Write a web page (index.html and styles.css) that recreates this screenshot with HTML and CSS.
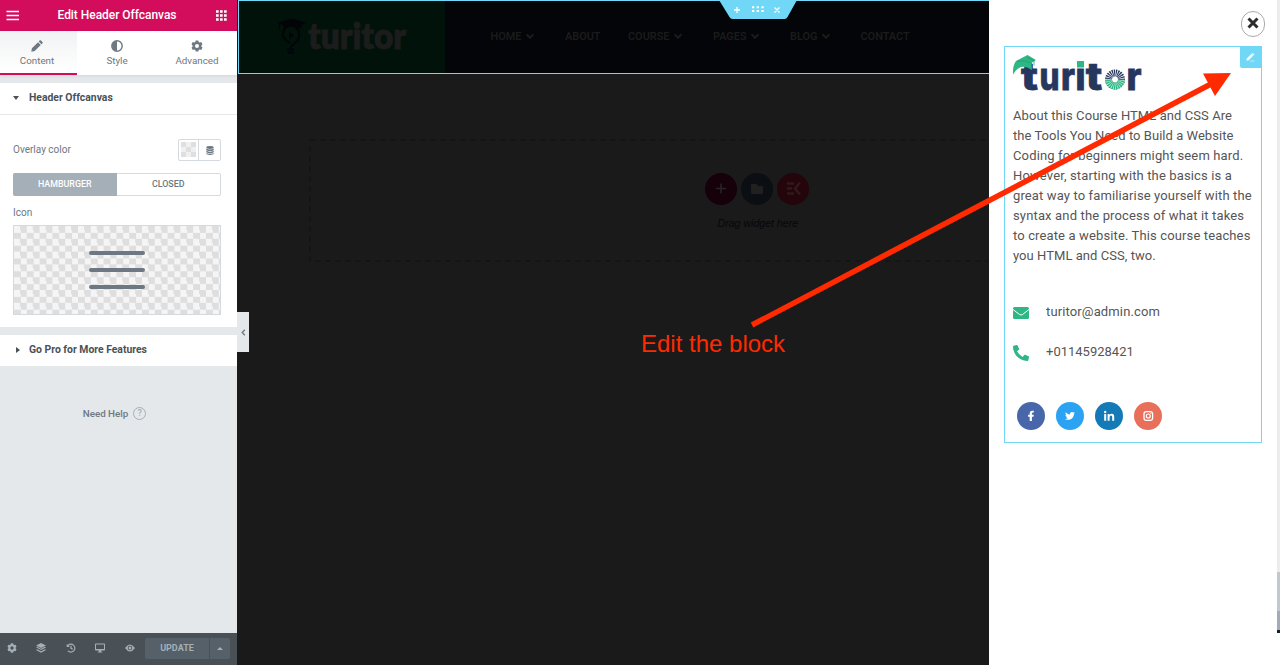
FILE: index.html
```html
<!DOCTYPE html>
<html lang="en">
<head>
<meta charset="utf-8">
<title>Edit Header Offcanvas</title>
<link rel="stylesheet" href="styles.css">
</head>
<body>
<aside class="panel">
  <header class="panel-header">
    <svg width="14" height="11" viewBox="0 0 14 11"><path d="M.5 1.500h12.500M.5 5.500h12.500M.5 9.500h12.500" stroke="#fff" stroke-width="1.700"/></svg>
    <h1>Edit Header Offcanvas</h1>
    <svg width="11" height="11" viewBox="0 0 11 11"><path d="M0 1.500h11M0 5.500h11M0 9.500h11" stroke="#fff" stroke-width="2.700" stroke-dasharray="2.700 1.300"/></svg>
  </header>
  <nav class="tabs">
    <div class="tab active">
      <svg width="12" height="12" viewBox="0 0 12 12"><path d="M.3 11.700l.6-3.400L7 2.200l2.800 2.800-6.100 6.100zM7.700 1.500l.9-.9q.7-.6 1.400 0l1.400 1.400q.6.700 0 1.400l-.9.900z" fill="#6d7882"/></svg>
      <span>Content</span></div>
    <div class="tab">
      <svg width="12" height="12" viewBox="0 0 12 12"><circle cx="6" cy="6" r="5.200" fill="none" stroke="#6d7882" stroke-width="1.400"/><path d="M6 1a5 5 0 0 0 0 10z" fill="#6d7882"/></svg>
      <span>Style</span></div>
    <div class="tab wide">
      <svg width="12" height="12" viewBox="0 0 12 12"><use href="#gear" fill="#6d7882"/></svg>
      <span>Advanced</span></div>
  </nav>
  <section class="section first">
    <h2><i class="caret down"></i>Header Offcanvas</h2>
    <div class="controls">
      <div class="color-row"><span>Overlay color</span>
        <div class="color-box"><div class="swatch-wrap"><i class="swatch"></i></div><div class="stack"><svg width="8" height="9" viewBox="0 0 8 9"><ellipse cx="4" cy="1.500" rx="3.700" ry="1.400"/><path d="M.3 2.600q3.700 1.700 7.400 0v1.600q-3.700 1.700-7.400 0zM.3 4.800q3.700 1.700 7.400 0v1.500q-3.700 1.700-7.400 0zM.3 6.900q3.700 1.700 7.400 0v1q-3.700 2-7.400 0z"/></svg></div></div>
      </div>
      <div class="toggle"><span class="on">HAMBURGER</span><span>CLOSED</span></div>
      <div class="label">Icon</div>
      <div class="preview"><i></i><i></i><i></i></div>
    </div>
  </section>
  <section class="section pro"><h2><i class="caret right"></i>Go Pro for More Features</h2></section>
  <div class="help">Need Help <span>?</span></div>
  <footer class="panel-footer">
    <svg width="10" height="10" viewBox="0 0 12 12"><path id="gear" fill-rule="evenodd" d="M4.700.4h2.600l.4 1.500 1 .6 1.500-.5 1.300 2.300L10.400 5.500v1.100l1.100 1.100-1.300 2.200-1.500-.4-1 .6-.4 1.500H4.700l-.4-1.500-1-.6-1.500.4L.5 7.700l1.100-1.100V5.500L.5 4.300 1.800 2l1.500.5 1-.6zM6 4a2 2 0 1 0 0 4 2 2 0 0 0 0-4z"/></svg>
    <svg width="10" height="10" viewBox="0 0 10 10"><path d="M5 0l5 2.500L5 5 0 2.500zM0 4.300l1.200-.5L5 5.700l3.800-1.900 1.200.6-5 2.700zM0 6.900l1.200-.6L5 8.200l3.800-1.900 1.200.6L5 9.700z"/></svg>
    <svg width="10" height="10" viewBox="0 0 10 10"><path d="M1.700 2.600a4 4 0 1 1 .2 5.200M5 2.800v2.500l1.700 1" fill="none" stroke="#a4afb7" stroke-width="1.200"/><path d="M.7.900v3.200h3.200z"/></svg>
    <svg width="10" height="10" viewBox="0 0 10 10"><path fill-rule="evenodd" d="M.7.500h8.600q.7 0 .7.700v5.600q0 .7-.7.700H6.100l.3 1.200h.8v.8H2.800v-.8h.8l.3-1.200H.7Q0 7.500 0 6.800V1.200Q0 .5.700.5zM1 1.500v4.400h8V1.500z"/></svg>
    <svg width="10" height="10" viewBox="0 0 10 10"><path fill-rule="evenodd" d="M0 5q5-7 10 0-5 7-10 0zM5 2.700a2.300 2.300 0 1 0 0 4.600 2.300 2.300 0 0 0 0-4.600z"/><circle cx="5" cy="5" r="1.500"/></svg>
    <div class="update"><b>UPDATE</b><span><i></i></span></div>
  </footer>
</aside>

<main class="canvas">
  <div class="site-header">
    <div class="site-logo">
      <svg width="206" height="72" viewBox="239 1 206 72">
        <path d="M278 23l14-4 13 4-4 2v3q-8-4-17 0v-3zM279.500 23v7" fill="#020408" stroke="#020408"/>
        <path d="M290 49q1-3 5-6 5-4 4-9a8 8 0 1 0-14 5q3 3 5 4M287 50l7-1M288 53l6-1" fill="none" stroke="#020408" stroke-width="2"/>
        <path d="M289 32l5 3.500-5 3.500z" fill="#020408"/>
        <text x="308" y="49" textLength="98" lengthAdjust="spacingAndGlyphs" class="dark-word">turitor</text>
      </svg>
    </div>
    <nav class="site-nav">
      <span>HOME <i></i></span><span>ABOUT</span><span>COURSE <i></i></span><span>PAGES <i></i></span><span>BLOG <i></i></span><span>CONTACT</span>
    </nav>
    <svg class="handle" width="78" height="19" viewBox="0 0 78 19"><path d="M0 0h78L68.500 17q-1 2-3 2h-52q-2 0-3-2z" fill="#71d7f7"/><path d="M15 10h6M18 7v6M55.500 7.500l5 5M60.500 7.500l-5 5" stroke="#fff" stroke-width="1.300"/><path d="M33 7.200h12M33 11h12" stroke="#fff" stroke-width="2" stroke-dasharray="2.300 2.400"/></svg>
  </div>
  <div class="drop">
    <svg class="dash" width="679" height="123"><rect x="1" y="1" width="700" height="121" fill="none" stroke="#151515" stroke-width="2" stroke-dasharray="6 4"/></svg>
    <div class="circles">
      <svg width="32" height="32"><circle cx="16" cy="16" r="16" fill="#16000a"/><path d="M11 15.500h10M16 10.500v10" stroke="#2a2426" stroke-width="1.500"/></svg>
      <svg width="32" height="32"><circle cx="16" cy="16" r="16" fill="#0b0e12"/><path d="M10 12q0-1 1-1h4l2 2h4q1 0 1 1v6q0 1-1 1H11q-1 0-1-1z" fill="#202020"/></svg>
      <svg width="32" height="32"><circle cx="16" cy="16" r="16" fill="#23050b"/><path d="M10 10.500h7M10 15.500h5M10 20.500h7M23 9.500l-5 6 5 6" fill="none" stroke="#30181d" stroke-width="2.500"/></svg>
    </div>
    <p>Drag widget here</p>
  </div>
  <div class="note">Edit the block</div>
  <div class="collapse"><svg width="5" height="7" viewBox="0 0 5 7"><path d="M3.800.7L1.200 3.500l2.600 2.800" fill="none" stroke="#6d7882" stroke-width="1.300"/></svg></div>
</main>

<aside class="offcanvas">
  <div class="close"><svg width="12" height="12" viewBox="0 0 12 12"><path d="M1.500 1.500l9 9M10.500 1.500l-9 9" stroke="#2d2d2d" stroke-width="3"/></svg></div>
  <div class="block">
    <div class="edit"><svg width="9" height="9" viewBox="0 0 9 9"><path d="M.8 5.800L5.600 1l1.500 1.500-4.800 4.800H.8zM6.200.5l.4-.4 1.500 1.500-.4.4zM4 8h4.500" fill="#fff" stroke="#fff" stroke-width=".5"/></svg></div>
    <svg class="brand" width="130" height="38" viewBox="1013 54 130 38">
      <g class="brand-word">
        <text x="1021" y="89.500" textLength="17" lengthAdjust="spacingAndGlyphs">t</text>
        <text x="1039.500" y="89.500" textLength="20" lengthAdjust="spacingAndGlyphs">u</text>
        <text x="1061" y="89.500" textLength="14" lengthAdjust="spacingAndGlyphs">r</text>
        <text x="1075.500" y="89.500" textLength="10" lengthAdjust="spacingAndGlyphs">ı</text>
        <text x="1085.800" y="89.500" textLength="16.500" lengthAdjust="spacingAndGlyphs">t</text>
        <text x="1126.500" y="89.500" textLength="15" lengthAdjust="spacingAndGlyphs">r</text>
      </g>
      <rect x="1077" y="61" width="7" height="6.500" fill="#2eb784"/>
      <circle cx="1115" cy="79.500" r="6.500" fill="none" stroke="#26375f" stroke-width="7" stroke-dasharray="1.050 .65"/>
      <path d="M1108.500 79.500a6.500 6.500 0 0 0 13 0" fill="none" stroke="#2eb784" stroke-width="7"/>
      <path d="M1108.500 79.500a6.500 6.500 0 0 0 13 0" fill="none" stroke="#d6f1e6" stroke-width="7" stroke-dasharray=".55 1.150"/>
      <path d="M1013 74.500q-.5-9 3-13.500L1027.500 55l8.500 5-4.500 3 .5 7q-6-4-11-3-4 1-8 7.500z" fill="#2eb784"/>
      <path d="M1017 61q8-1 14.500 2l-.3 6M1027 57.500l7 3v5" fill="none" stroke="#1d9c6d" stroke-width=".7"/>
    </svg>
    <p class="about"><span class="l1">About this Course HTML and CSS Are</span><br><span class="l2">the Tools You Need to Build a Website</span><br><span class="l3">Coding for beginners might seem hard.</span><br><span class="l4">However, starting with the basics is a</span><br><span class="l5">great way to familiarise yourself with the</span><br><span class="l6">syntax and the process of what it takes</span><br><span class="l7">to create a website. This course teaches</span><br><span class="l8">you HTML and CSS, two.</span></p>
    <div class="contact mail"><svg width="16" height="12" viewBox="0 0 16 12"><rect width="16" height="12" rx="1.500" fill="#2eb784"/><path d="M0 2.500l6.500 5q1.500 1 3 0l6.500-5" fill="none" stroke="#fff"/></svg><span>turitor@admin.com</span></div>
    <div class="contact phone"><svg width="16" height="16" viewBox="0 0 512 512"><path fill="#2eb784" d="M18.600 24.600l104-24q18-3 26 13l48 112q6 16-7 28l-61 50q53 113 180 180l50-61q12-13 28-7l112 48q16 8 13 26l-24 104q-4 18-23 18C207 512 0 303 0 48q0-19 18.600-23.400z"/></svg><span>+01145928421</span></div>
    <div class="socials">
      <svg width="28" height="28" viewBox="0 0 28 28"><circle cx="14" cy="14" r="14" fill="#4867aa"/><path d="M12.700 19v-4.300h-1.600v-1.900h1.600v-1.500q0-2.600 2.600-2.600l1.500.1V10.500H16q-1.100 0-1.100 1v1.300h1.900l-.3 1.900h-1.600V19z" fill="#fff"/></svg>
      <svg width="28" height="28" viewBox="0 0 28 28"><circle cx="14" cy="14" r="14" fill="#2ba3f2"/><path transform="translate(9 8.800) scale(.0195)" d="M459 152c1 4 1 9 1 13 0 139-106 299-299 299-59 0-115-17-161-47 55 6 108-9 150-41-44-1-80-30-93-68 16 2 30 2 47-2-47-10-82-52-82-103v-1q22 12 47 13C27 186 11 129 37 80c52 64 130 105 216 110-16-75 41-134 102-134 30 0 58 13 77 33q35-7 66-25-11 35-46 58 31-4 60-16-21 29-53 46z" fill="#fff"/></svg>
      <svg width="28" height="28" viewBox="0 0 28 28"><circle cx="14" cy="14" r="14" fill="#1479b7"/><path d="M9.200 12h2v6.700h-2zM12.600 12h2v1q.8-1.200 2.100-1.200 2.500 0 2.500 2.900v4h-2v-3.600q0-1.500-1.100-1.500-1.500 0-1.500 1.800v3.300h-2z" fill="#fff"/><circle cx="10.200" cy="10" r="1.200" fill="#fff"/></svg>
      <svg width="28" height="28" viewBox="0 0 28 28"><circle cx="14" cy="14" r="14" fill="#e8705a"/><rect x="10" y="9.700" width="8.600" height="8.600" rx="2.300" fill="none" stroke="#fff" stroke-width="1.300"/><circle cx="14.300" cy="14" r="2" fill="none" stroke="#fff" stroke-width="1.200"/><circle cx="16.800" cy="11.500" r=".6" fill="#fff"/></svg>
    </div>
  </div>
  <div class="scrollbar"><i></i></div>
</aside>
<svg class="arrow" width="1280" height="665" viewBox="0 0 1280 665"><path d="M752 325L1210 84.500" stroke="#ff2a00" stroke-width="5.500"/><path d="M1231 73L1203 73.500 1215 96z" fill="#ff2a00"/></svg>
</body>
</html>
```
FILE: styles.css
```css
* { box-sizing: border-box; }
body { margin: 0; width: 1280px; height: 665px; overflow: hidden; display: flex; position: relative; font-family: Roboto, sans-serif; background: #fff; }
h1, h2, p { margin: 0; }
svg { display: block; flex: none; }

.panel { width: 237px; height: 665px; background: #e4e8eb; display: flex; flex-direction: column; color: #6d7882; font-size: 10px; }
.panel-header { height: 31px; background: #d30c5c; display: flex; align-items: center; justify-content: space-between; padding: 0 10px 0 6px; }
.panel-header h1 { color: #fff; font-size: 12px; font-weight: 500; line-height: 31px; letter-spacing: -.04px; padding-right: 2px; }
.tabs { height: 44px; display: flex; background: #fff; box-shadow: 0 1px 3px rgba(0,0,0,.08); }
.tab { width: 77px; display: flex; flex-direction: column; align-items: center; padding-top: 9px; gap: 3px; line-height: 11px; font-weight: 400; font-size: 9.800px; padding-right: 3px; }
.tab + .tab { width: 80px; padding-right: 0; }
.tab.active { background: linear-gradient(#f1f2f3, #fff); border-bottom: 2px solid #d30c5c; }
.section { background: #fff; }
.first { margin-top: 8px; height: 244px; }
.section h2 { height: 31px; display: flex; align-items: center; font-size: 10.400px; color: #495157; font-weight: 700; padding-left: 13px; }
.first h2 { height: 32px; padding-bottom: 2px; border-bottom: 1px solid #e4e8eb; }
.caret { width: 16px; height: 8px; display: grid; align-items: center; }
.caret::before { content: ""; display: block; width: 0; height: 0; border: 3px solid transparent; }
.caret.down::before { border-top: 4px solid #495157; border-bottom: 0; }
.caret.right::before { border-left: 4px solid #495157; border-right: 0; margin-left: 3px; }
.controls { padding: 24px 16px 0 13px; }
.color-row { display: flex; align-items: center; justify-content: space-between; height: 22px; }
.color-row > span { font-size: 10px; margin-top: -1px; }
.color-box { width: 43px; height: 22px; border: 1px solid #d5dadf; border-radius: 2px; display: flex; }
.swatch-wrap { width: 20px; border-right: 1px solid #d5dadf; padding: 2px; }
.swatch { display: block; width: 15px; height: 15px; background: repeating-conic-gradient(#f0f0f0 0 25%, #dfdfdf 0 50%) 0 0 / 10px 10px; }
.stack { flex: 1; display: grid; place-items: center; fill: #6d7882; }
.toggle { margin-top: 12px; height: 23px; display: flex; border: 1px solid #d5dadf; border-radius: 2px; font-size: 8.900px; font-weight: 500; }
.toggle span { flex: 1; text-align: center; line-height: 20px; }
.toggle .on { background: #a4afb7; color: #fff; margin: -1px 0 -1px -1px; border-radius: 2px 0 0 2px; line-height: 22px; }
.label { margin-top: 10px; height: 14px; line-height: 14px; }
.preview { margin-top: 5px; height: 90px; border: 1px solid #d5dadf; display: flex; flex-direction: column; align-items: center; gap: 12.500px; padding-top: 24.500px; background: repeating-conic-gradient(#dedede 0 25%, #f5f5f5 0 50%) 0 0 / 12.800px 12.800px; }
.preview i { width: 56px; height: 4.500px; background: #6d7882; border-radius: 3px; }
.pro { margin-top: 8px; height: 31px; }
.pro h2 { padding-bottom: 2px; }
.help { margin-top: 41px; display: flex; justify-content: center; align-items: center; gap: 5px; font-weight: 500; font-size: 9.800px; padding-right: 8px; }
.help span { width: 13px; height: 13px; border: 1.500px solid #a4afb7; border-radius: 50%; text-align: center; line-height: 11px; font-size: 9px; color: #a4afb7; }
.panel-footer { margin-top: auto; height: 32px; background: #495157; display: flex; align-items: center; padding: 0 0 2px 6.500px; gap: 19.600px; fill: #a4afb7; }
.update { width: 85px; margin-left: -9.500px; height: 21px; display: flex; background: #556068; border-radius: 2px; color: #a4afb7; font-size: 9px; line-height: 20px; text-align: center; }
.update b { width: 64px; font-weight: 700; }
.update span { flex: 1; border-left: 1px solid #495157; display: grid; place-items: center; }
.update i { border: 3px solid transparent; border-bottom-color: #a4afb7; border-top: 0; }

.canvas { width: 752px; height: 665px; background: #1a1a1a; position: relative; }
.site-header { height: 74px; margin-left: 1px; border: 1px solid #71d7f7; border-right: 0; background: #040508; display: flex; position: relative; }
.site-logo { width: 206px; background: #00120a; }
.dark-word { font: 800 35.500px Lato, sans-serif; fill: #1c1c1c; stroke: #1c1c1c; stroke-width: .8px; }
.site-nav { display: grid; grid-template-columns: 74.500px 63px 85px 77px 70.500px auto; padding: 29px 0 0 45.500px; color: #1b1b1b; font-size: 10.900px; font-weight: 600; line-height: 14px; white-space: nowrap; }
.site-nav i { display: inline-block; width: 6px; height: 6px; border: solid #1b1b1b; border-width: 0 2px 2px 0; transform: translateY(-2px) rotate(45deg); margin-left: 3px; }
.handle { position: absolute; left: 479.500px; top: -1px; }
.drop { margin: 65px 0 0 72px; width: 680px; height: 123px; position: relative; display: flex; flex-direction: column; padding: 34px 0 0 396px; overflow: hidden; }
.dash { position: absolute; left: 0; top: 0; }
.circles { display: flex; gap: 4px; }
.drop p { margin: 11px 0 0 12.500px; font: italic 10.600px/14px "Liberation Sans", sans-serif; color: #070707; white-space: nowrap; }
.note { margin: 68px 0 0 404px; font: 24px/28px "Liberation Sans", sans-serif; color: #ff2a00; white-space: nowrap; }
.collapse { position: absolute; left: 0; top: 312px; width: 12px; height: 40px; background: #e4e8eb; display: grid; place-items: center; }

.offcanvas { width: 291px; height: 665px; background: #fff; position: relative; padding: 11px 18px 0 15px; }
.close { width: 24px; height: 26px; border: 1px solid #aaa; border-radius: 12px; margin-left: 237px; display: grid; place-items: center; padding-bottom: 2px; }
.block { margin-top: 9px; height: 397px; border: 1px solid #71d7f7; position: relative; padding: 7px 8px; color: #555; }
.edit { position: absolute; right: 0; top: 0; width: 21px; height: 21px; background: #71d7f7; display: grid; place-items: center; border-radius: 0 0 0 2px; }
.brand { overflow: visible; }
.brand-word { font: 800 38px Inter, sans-serif; fill: #26375f; stroke: #26375f; stroke-width: .8px; }
.about { margin-top: 14px; font-size: 13px; line-height: 20px; white-space: nowrap; }
.l1 { letter-spacing: .07px; }
.l2 { letter-spacing: .04px; }
.l3, .l6 { letter-spacing: .15px; }
.l4, .l5, .l7 { letter-spacing: .13px; }
.l8 { letter-spacing: .05px; }
.contact { display: flex; align-items: center; gap: 17px; font-size: 13px; height: 20px; }
.mail { margin-top: 35px; letter-spacing: .13px; }
.phone { margin-top: 20px; }
.contact svg { position: relative; top: 2px; }
.socials { display: flex; gap: 11px; margin: 41px 0 0 4px; }
.scrollbar { position: absolute; right: 0; top: 0; width: 3px; height: 633px; background: #ececec; padding-top: 572px; border-bottom: 3px solid #17202c; }
.scrollbar i { display: block; height: 58px; background: linear-gradient(#c3c7cf 0 39px, #a4aab7 39px); }
.arrow { position: absolute; left: 0; top: 0; pointer-events: none; }
```
